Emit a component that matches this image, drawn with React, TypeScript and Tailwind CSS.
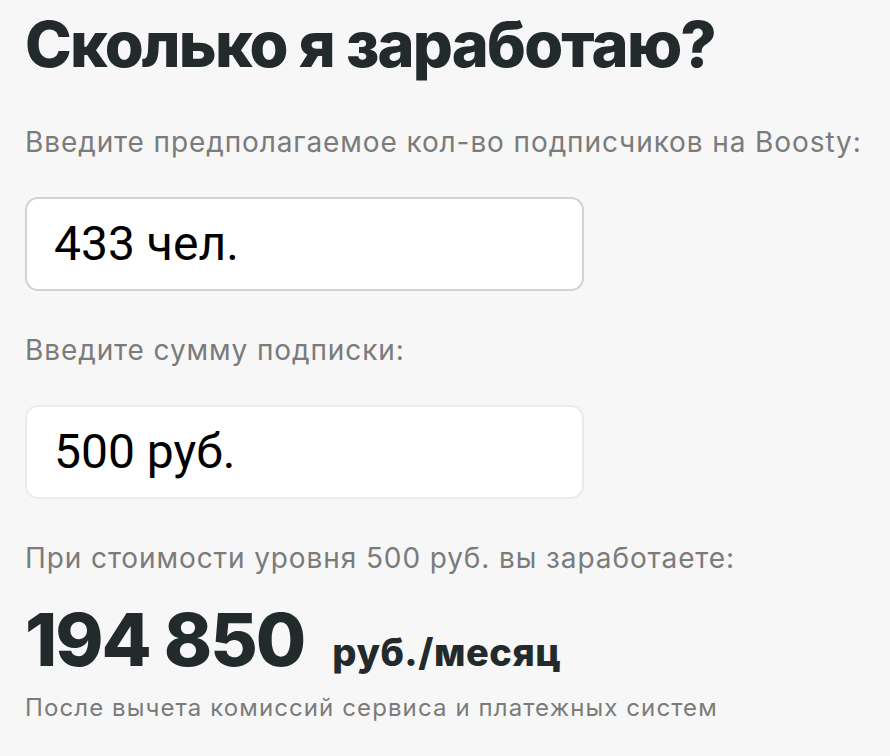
export default function App() {
  return (
    <div className="min-h-[756px] w-[890px] bg-[#f7f7f7] px-[25px] pt-[6px] font-['Inter',sans-serif]">
      <h1 className="text-[63px] leading-[76px] font-extrabold tracking-[-1.8px] text-[#232a2b]">
        Сколько я заработаю?
      </h1>
      <p className="mt-[43px] text-[28px] leading-[34px] tracking-[0.9px] text-[#7b7b7b]">
        Введите предполагаемое кол-во подписчиков на Boosty:
      </p>
      <div className="mt-[38px] flex h-[94px] w-[559px] items-center rounded-[13px] border-2 border-[#d2d2d2] bg-white pl-[27px]">
        <span className="font-['Roboto',sans-serif] text-[48px] leading-none text-black">433 чел.</span>
      </div>
      <p className="mt-[42px] text-[28px] leading-[34px] tracking-[0.9px] text-[#7b7b7b]">
        Введите сумму подписки:
      </p>
      <div className="mt-[38px] flex h-[94px] w-[559px] items-center rounded-[13px] border-2 border-[#ebebeb] bg-white pl-[27px]">
        <span className="font-['Roboto',sans-serif] text-[48px] leading-none text-black">500 руб.</span>
      </div>
      <p className="mt-[42px] text-[28px] leading-[34px] tracking-[0.9px] text-[#7b7b7b]">
        При стоимости уровня 500 руб. вы заработаете:
      </p>
      <div className="mt-[25px] flex items-baseline gap-[28px] text-[#232a2b]">
        <span className="text-[73px] leading-[80px] font-extrabold tracking-[-2px]">194 850</span>
        <span className="text-[38px] font-extrabold tracking-[0.5px]">руб./месяц</span>
      </div>
      <p className="mt-[12px] text-[24px] leading-[30px] tracking-[1.1px] text-[#7b7b7b]">
        После вычета комиссий сервиса и платежных систем
      </p>
    </div>
  );
}
